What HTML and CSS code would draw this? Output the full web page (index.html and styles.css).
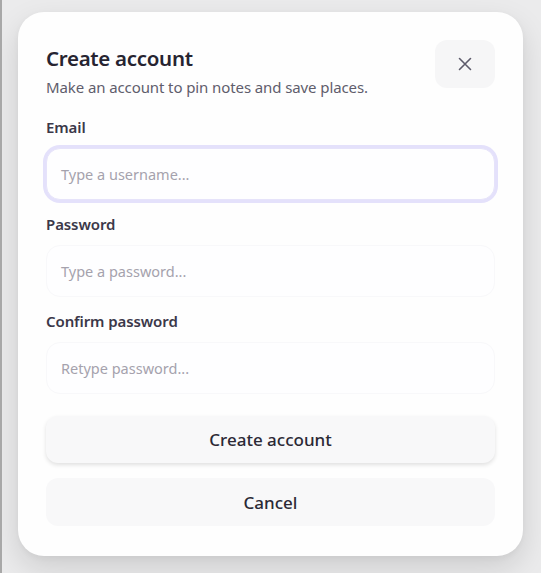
FILE: index.html
```html
<!DOCTYPE html>
<html>
<head>
<meta charset="utf-8">
<link rel="stylesheet" href="styles.css">
</head>
<body>
<div class="stage">
  <div class="card">
    <div class="header">
      <div class="heading">
        <h1 class="title">Create account</h1>
        <p class="subtitle">Make an account to pin notes and save places.</p>
      </div>
      <button class="close" aria-label="Close">
        <svg width="16" height="16" viewBox="0 0 16 16"><path d="M2.5 2.5 L13.5 13.5 M13.5 2.5 L2.5 13.5" stroke="#5d5b6b" stroke-width="1.6" stroke-linecap="round" fill="none"/></svg>
      </button>
    </div>
    <div class="fields">
      <div class="field">
        <label class="label">Email</label>
        <div class="input focused">Type a username...</div>
      </div>
      <div class="field">
        <label class="label">Password</label>
        <div class="input">Type a password...</div>
      </div>
      <div class="field">
        <label class="label">Confirm password</label>
        <div class="input">Retype password...</div>
      </div>
    </div>
    <div class="actions">
      <button class="btn primary">Create account</button>
      <button class="btn secondary">Cancel</button>
    </div>
  </div>
</div>
</body>
</html>
```
FILE: styles.css
```css
html, body {
  margin: 0;
  padding: 0;
}
body {
  width: 541px;
  height: 573px;
  background: #ebebec;
  font-family: "Noto Sans", "Open Sans", sans-serif;
  box-sizing: border-box;
  border-left: 2px solid #a8a8a8;
  overflow: hidden;
}
.stage {
  padding: 12px 0 0 16px;
}
.card {
  width: 505px;
  box-sizing: border-box;
  background: #fefefe;
  border-radius: 26px;
  padding: 28px 28px 30px 28px;
  box-shadow: 0 12px 30px rgba(0,0,0,0.13), 0 2px 6px rgba(0,0,0,0.04);
}
.header {
  display: flex;
  justify-content: space-between;
  align-items: flex-start;
}
.heading {
  padding-top: 3px;
}
.title {
  margin: 0;
  font-size: 20.5px;
  line-height: 30px;
  font-weight: 600;
  color: #262431;
  letter-spacing: -0.3px;
}
.subtitle {
  margin: 4px 0 0 0;
  font-size: 15px;
  line-height: 20px;
  color: #5f5d6c;
  letter-spacing: -0.1px;
}
.close {
  width: 60px;
  height: 48px;
  border: none;
  border-radius: 12px;
  background: #f6f6f7;
  display: flex;
  align-items: center;
  justify-content: center;
  padding: 0;
}
.fields {
  margin-top: 20px;
  display: flex;
  flex-direction: column;
  gap: 14px;
}
.field {
  display: flex;
  flex-direction: column;
  gap: 11px;
}
.label {
  font-size: 15px;
  line-height: 20px;
  font-weight: 600;
  color: #3b3849;
  letter-spacing: -0.1px;
}
.input {
  height: 52px;
  box-sizing: border-box;
  border-radius: 14px;
  background: #fefeff;
  border: 1px solid #f8f8fa;
  padding: 0 14px;
  display: flex;
  align-items: center;
  font-size: 14.5px;
  color: #a5a2ad;
}
.input.focused {
  border: 1px solid #e6e3fa;
  box-shadow: 0 0 0 3px #e4e1fb;
  background: #fefeff;
}
.actions {
  margin-top: 22px;
  display: flex;
  flex-direction: column;
  gap: 15px;
}
.btn {
  height: 47px;
  border: none;
  border-radius: 12px;
  background: #f8f8f9;
  font-family: "Noto Sans", "Open Sans", sans-serif;
  font-size: 17px;
  font-weight: 500;
  color: #2b2935;
}
.btn.primary {
  box-shadow: 0 2px 4px rgba(0,0,0,0.12);
}
.btn.secondary {
  height: 48px;
  background: #f8f8f9;
}
```
